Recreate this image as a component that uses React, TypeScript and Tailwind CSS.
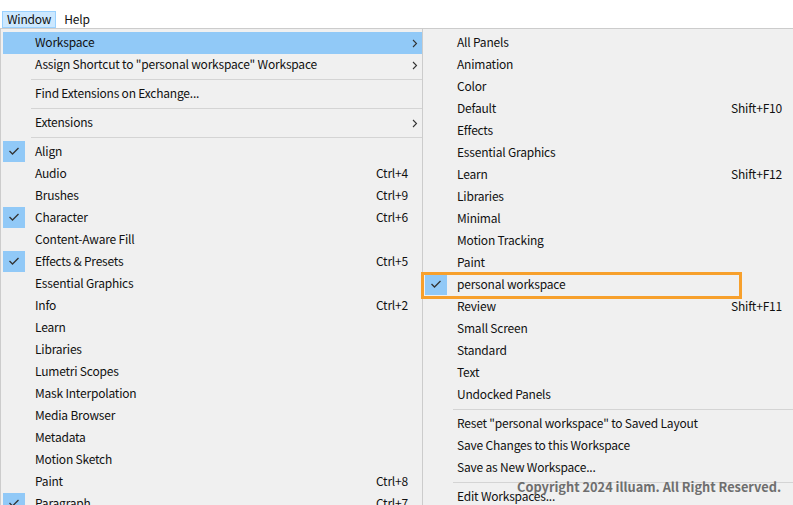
import React from 'react';

type Entry =
  | { sep: true }
  | { sep?: false; label: string; shortcut?: string; checked?: boolean; arrow?: boolean; active?: boolean };

const leftMenu: Entry[] = [
  { label: 'Workspace', arrow: true, active: true },
  { label: 'Assign Shortcut to "personal workspace" Workspace', arrow: true },
  { sep: true },
  { label: 'Find Extensions on Exchange...' },
  { sep: true },
  { label: 'Extensions', arrow: true },
  { sep: true },
  { label: 'Align', checked: true },
  { label: 'Audio', shortcut: 'Ctrl+4' },
  { label: 'Brushes', shortcut: 'Ctrl+9' },
  { label: 'Character', shortcut: 'Ctrl+6', checked: true },
  { label: 'Content-Aware Fill' },
  { label: 'Effects & Presets', shortcut: 'Ctrl+5', checked: true },
  { label: 'Essential Graphics' },
  { label: 'Info', shortcut: 'Ctrl+2' },
  { label: 'Learn' },
  { label: 'Libraries' },
  { label: 'Lumetri Scopes' },
  { label: 'Mask Interpolation' },
  { label: 'Media Browser' },
  { label: 'Metadata' },
  { label: 'Motion Sketch' },
  { label: 'Paint', shortcut: 'Ctrl+8' },
  { label: 'Paragraph', shortcut: 'Ctrl+7', checked: true },
];

const rightMenu: Entry[] = [
  { label: 'All Panels' },
  { label: 'Animation' },
  { label: 'Color' },
  { label: 'Default', shortcut: 'Shift+F10' },
  { label: 'Effects' },
  { label: 'Essential Graphics' },
  { label: 'Learn', shortcut: 'Shift+F12' },
  { label: 'Libraries' },
  { label: 'Minimal' },
  { label: 'Motion Tracking' },
  { label: 'Paint' },
  { label: 'personal workspace', checked: true },
  { label: 'Review', shortcut: 'Shift+F11' },
  { label: 'Small Screen' },
  { label: 'Standard' },
  { label: 'Text' },
  { label: 'Undocked Panels' },
  { sep: true },
  { label: 'Reset "personal workspace" to Saved Layout' },
  { label: 'Save Changes to this Workspace' },
  { label: 'Save as New Workspace...' },
  { sep: true },
  { label: 'Edit Workspaces...' },
];

const Check = () => (
  <svg width="22" height="21" viewBox="0 0 22 21" className="block">
    <polyline points="6.5,10 9.5,13 15.5,7" fill="none" stroke="#333" strokeWidth="1.3" />
  </svg>
);

const Chevron = () => (
  <svg width="6" height="9" viewBox="0 0 6 9" className="block">
    <polyline points="1,1 4.5,4.5 1,8" fill="none" stroke="#333" strokeWidth="1.1" />
  </svg>
);

const MenuRow = ({ item, trailing }: { item: Entry; trailing: 'arrow' | 'plain' }) => {
  if (item.sep) {
    return (
      <div className="h-[7px] pl-[28px] pt-[3px]">
        <div className="h-px bg-[#d4d4d4]" />
      </div>
    );
  }
  return (
    <div className={`flex h-[22px] items-center ${item.active ? 'bg-[#91c9f7]' : ''}`}>
      <div className={`h-[21px] w-[22px] shrink-0 self-start ${item.checked ? 'bg-[#91c9f7]' : ''}`}>
        {item.checked && <Check />}
      </div>
      <span className="ml-[10px] flex-1 whitespace-nowrap pb-[2px]">{item.label}</span>
      {item.shortcut && <span className="whitespace-nowrap pb-[2px]">{item.shortcut}</span>}
      {trailing === 'arrow' ? (
        <div className="flex w-[14px] shrink-0 items-center pl-[4px]">{item.arrow && <Chevron />}</div>
      ) : (
        <div className="w-[11px] shrink-0" />
      )}
    </div>
  );
};

export default function App() {
  return (
    <div className="relative h-[505px] w-[793px] overflow-hidden bg-white font-['Noto_Sans_CJK_KR',sans-serif] text-[12px] leading-none tracking-[-0.2px] text-[#111]">
      {/* Menu bar */}
      <div className="flex h-[28px] items-end pl-[2px]">
        <div className="flex h-[17px] items-center border border-[#99d1ff] bg-[#cce8ff] px-[4px] pb-[1px]">Window</div>
        <div className="ml-[1px] flex h-[17px] items-center px-[7px] pb-[1px]">Help</div>
      </div>

      {/* Menus */}
      <div className="flex h-[477px] border-t border-[#cccccc]">
        <div className="w-[422px] shrink-0 border-l border-[#cccccc] bg-[#f0f0f0] pl-[2px] pt-[3px]">
          {leftMenu.map((item, i) => (
            <MenuRow key={i} item={item} trailing="arrow" />
          ))}
        </div>
        <div className="flex-1 border-l border-[#cccccc] bg-[#f0f0f0] pl-[2px] pt-[3px]">
          {rightMenu.map((item, i) => (
            <MenuRow key={i} item={item} trailing="plain" />
          ))}
        </div>
      </div>

      {/* Highlight annotation */}
      <div className="absolute left-[421px] top-[272px] h-[27px] w-[321px] border-[3px] border-[#f7a02c]" />

      {/* Watermark */}
      <div className="absolute left-[517px] top-[481px] whitespace-nowrap text-[12.8px] font-bold tracking-normal text-[#6e6e6e]">
        Copyright 2024 illuam. All Right Reserved.
      </div>
    </div>
  );
}
